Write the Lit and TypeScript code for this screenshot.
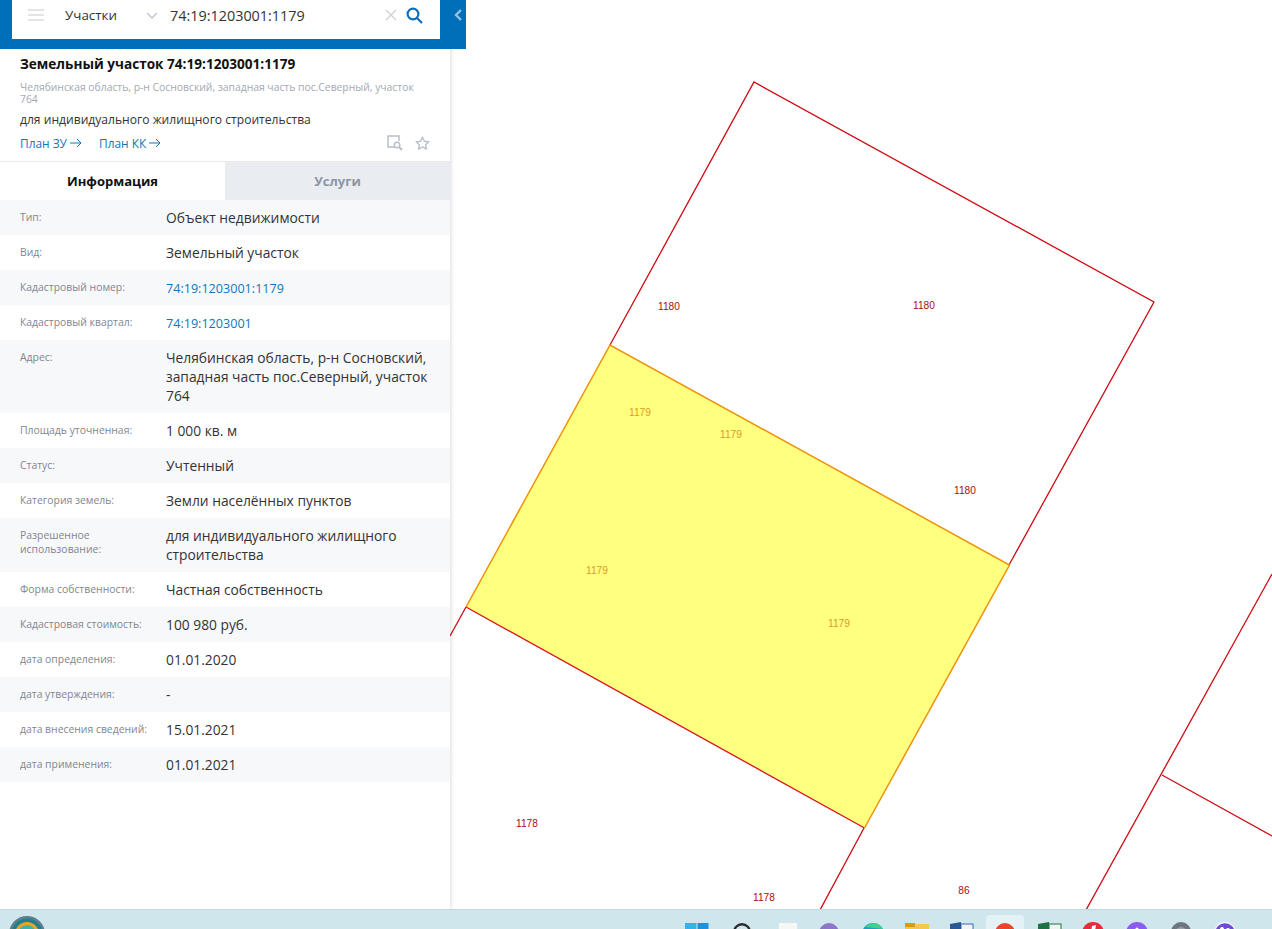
import { LitElement, html, css, svg } from "lit";
import { customElement } from "lit/decorators.js";

type Row = { label: string; value: string; link?: boolean };

const ROWS: Row[] = [
  { label: "Тип:", value: "Объект недвижимости" },
  { label: "Вид:", value: "Земельный участок" },
  { label: "Кадастровый номер:", value: "74:19:1203001:1179", link: true },
  { label: "Кадастровый квартал:", value: "74:19:1203001", link: true },
  { label: "Адрес:", value: "Челябинская область, р-н Сосновский, западная часть пос.Северный, участок 764" },
  { label: "Площадь уточненная:", value: "1 000 кв. м" },
  { label: "Статус:", value: "Учтенный" },
  { label: "Категория земель:", value: "Земли населённых пунктов" },
  { label: "Разрешенное использование:", value: "для индивидуального жилищного строительства" },
  { label: "Форма собственности:", value: "Частная собственность" },
  { label: "Кадастровая стоимость:", value: "100 980 руб." },
  { label: "дата определения:", value: "01.01.2020" },
  { label: "дата утверждения:", value: "-" },
  { label: "дата внесения сведений:", value: "15.01.2021" },
  { label: "дата применения:", value: "01.01.2021" },
];

const LABELS: [string, number, number, string][] = [
  ["1180", 669, 306, "red"],
  ["1180", 924, 305, "red"],
  ["1180", 965, 490, "red"],
  ["1179", 640, 412, "orange"],
  ["1179", 731, 434, "orange"],
  ["1179", 597, 570, "orange"],
  ["1179", 839, 623, "orange"],
  ["1178", 527, 823, "red"],
  ["1178", 764, 897, "red"],
  ["86", 964, 890, "red"],
];

const TASK_ICONS = [
  svg`<rect x="10" y="13" width="11.5" height="11" fill="#2fb4f0"/><rect x="22.5" y="13" width="11" height="11" fill="#1b93e2"/>`,
  svg`<circle cx="23" cy="22" r="7.8" fill="none" stroke="#2b2b2b" stroke-width="2.4"/>`,
  svg`<rect x="16" y="13" width="18" height="20" fill="#f6f6f6"/>`,
  svg`<circle cx="22" cy="23" r="10" fill="#8b78c8"/>`,
  svg`<circle cx="22" cy="24" r="11" fill="#1aa0c8"/><path d="M14 17a11 11 0 0 1 18 2z" fill="#3fd08a"/>`,
  svg`<rect x="10" y="14" width="24" height="12" fill="#f2c94c"/><rect x="10" y="13" width="10" height="4" fill="#dc9a0e"/>`,
  svg`<rect x="22" y="14" width="12" height="12" fill="#f2f4f7" stroke="#3d68ad"/><path d="M11 14l11-2v14H11z" fill="#2b5797"/>`,
  svg`<circle cx="22" cy="23" r="10" fill="#e8452c"/><rect x="24" y="19" width="8" height="3" fill="#f4b400"/>`,
  svg`<rect x="22" y="14" width="12" height="12" fill="#eef5f0" stroke="#217346"/><path d="M11 14l11-2v14H11z" fill="#1e7145"/>`,
  svg`<circle cx="22" cy="23" r="11" fill="#ea2a3a"/><path d="M21 16l4-1-1 6-4 1z" fill="#fff"/>`,
  svg`<circle cx="22" cy="23" r="11" fill="#8a5cf0"/><circle cx="22" cy="19" r="1.6" fill="#fff"/>`,
  svg`<circle cx="22" cy="22" r="10" fill="#6f7680"/><circle cx="22" cy="23" r="6" fill="#9aa1aa"/>`,
  svg`<circle cx="22" cy="23" r="10.5" fill="#6d4bd6" stroke="#f2effc" stroke-width="1.4"/><circle cx="19" cy="19" r="2" fill="#fff"/><circle cx="25" cy="20" r="2" fill="#fff"/>`,
];

@customElement("app-root")
export class AppRoot extends LitElement {
  static styles = css`
    :host {
      display: grid;
      grid-template-rows: 1fr 20px;
      width: 100%;
      height: 929px;
      overflow: hidden;
      background: #fff;
      font-family: "Open Sans", "Noto Sans", sans-serif;
      color: #222;
    }
    .main { display: flex; min-height: 0; }
    .side {
      flex: 0 0 450px;
      width: 450px;
      min-width: 0;
      position: relative;
      z-index: 2;
      background: #fff;
      box-shadow: 1px 0 4px rgba(0, 0, 0, 0.14);
      display: flex;
      flex-direction: column;
      align-items: stretch;
    }
    .bar {
      width: 466px;
      height: 49px;
      box-sizing: border-box;
      background: #006fb9;
      display: flex;
      padding: 0 4px 10px 12px;
      align-items: stretch;
      gap: 14px;
      flex: none;
    }
    .search {
      flex: 1;
      background: #fff;
      display: flex;
      align-items: center;
      padding-bottom: 9px;
    }
    .burger { margin-left: 16px; display: block; }
    .kind { margin-left: 21px; width: 81px; font-size: 13.4px; color: #333; }
    .caret { display: block; }
    .query { margin-left: 12px; flex: 1; font-size: 14.4px; color: #333; }
    .clear { display: block; margin-right: 9px; }
    .glass { display: block; margin-right: 17px; }
    .collapse { display: block; align-self: center; margin-bottom: 9px; }
    .head { padding: 6px 20px 0; height: 113px; box-sizing: border-box; border-bottom: 1px solid #e8eaed; flex: none; }
    .title { font-size: 13.6px; font-weight: 700; line-height: 18px; color: #111; }
    .addr { margin-top: 8px; font-size: 10.35px; line-height: 12px; color: #a2a9b2; }
    .use { margin-top: 7px; font-size: 12.1px; line-height: 16px; color: #333; }
    .links { display: flex; align-items: center; margin-top: 6px; height: 18px; }
    .lnk { font-size: 11.9px; color: #1276bd; display: flex; align-items: center; gap: 3px; margin-right: 17px; }
    .tools { margin-left: auto; display: flex; align-items: center; gap: 12px; }
    .tools svg { display: block; }
    .tabs { display: flex; height: 38px; flex: none; }
    .tab {
      flex: 1;
      display: flex;
      align-items: center;
      justify-content: center;
      font-size: 13px;
      font-weight: 700;
    }
    .on { color: #111; background: #fff; }
    .off { color: #8d96a3; background: #e9ecf1; }
    .row {
      display: grid;
      grid-template-columns: 146px 1fr;
      padding: 8px 20px;
      align-items: start;
    }
    .row:nth-child(odd) { background: #f7f8fa; }
    .k { font-size: 10.4px; line-height: 14px; color: #7f868f; margin-top: 2px; padding-right: 12px; }
    .v { font-size: 13.8px; line-height: 19px; color: #333; }
    .v.a { color: #1276bd; font-size: 12.6px; margin-top: 1px; margin-bottom: -1px; }
    .map { flex: 1; min-width: 0; position: relative; }
    .map svg { display: block; width: 100%; height: 100%; }
    .txt { font-family: "Liberation Sans", Arial, sans-serif; font-size: 10.2px; text-anchor: middle; dominant-baseline: central; }
    .txt.red { fill: #a80c0c; }
    .txt.orange { fill: #dc9a2a; }
    .task {
      background: #cfe6ec;
      border-top: 1px solid #bcd8e0;
      display: flex;
      overflow: hidden;
      position: relative;
      z-index: 3;
      padding-right: 25px;
    }
    .logo { display: block; flex: none; margin-left: 9px; margin-top: 6px; }
    .icons { margin-left: auto; display: flex; }
    .slot { width: 44px; height: 19px; flex: none; }
    .slot svg { display: block; overflow: visible; }
    .slot.active { position: relative; }
    .slot.active::before {
      content: "";
      position: absolute;
      left: 3px;
      right: 3px;
      top: 5px;
      height: 30px;
      border-radius: 4px;
      background: #e4f1f5;
    }
    .slot.active svg { position: relative; }
  `;

  private arrow() {
    return html`<svg width="12" height="10" viewBox="0 0 12 10" fill="none" stroke="#1276bd" stroke-width="1"><path d="M0 5h11M7 1l4 4-4 4"/></svg>`;
  }

  render() {
    return html`
      <div class="main">
        <aside class="side">
          <div class="bar">
            <div class="search">
              <svg class="burger" width="16" height="12" viewBox="0 0 16 12" fill="#e4e4e4"><rect width="16" height="2"/><rect y="5" width="16" height="2"/><rect y="10" width="16" height="2"/></svg>
              <span class="kind">Участки</span>
              <svg class="caret" width="12" height="7" viewBox="0 0 12 7" fill="none" stroke="#c5ccd4" stroke-width="1.6"><path d="M1 1l5 5 5-5"/></svg>
              <span class="query">74:19:1203001:1179</span>
              <svg class="clear" width="12" height="12" viewBox="0 0 12 12" stroke="#cfd2d5" stroke-width="1.4"><path d="M1 1l10 10M11 1L1 11"/></svg>
              <svg class="glass" width="17" height="17" viewBox="0 0 17 17" fill="none" stroke="#0f6fb6" stroke-width="2.2"><circle cx="7" cy="7" r="5.4"/><path d="M11 11l5 5"/></svg>
            </div>
            <svg class="collapse" width="8" height="12" viewBox="0 0 8 12" fill="none" stroke="#93c1e2" stroke-width="2.4"><path d="M7 1L2 6l5 5"/></svg>
          </div>
          <div class="head">
            <div class="title">Земельный участок 74:19:1203001:1179</div>
            <div class="addr">Челябинская область, р-н Сосновский, западная часть пос.Северный, участок 764</div>
            <div class="use">для индивидуального жилищного строительства</div>
            <div class="links">
              <span class="lnk">План ЗУ ${this.arrow()}</span>
              <span class="lnk">План КК ${this.arrow()}</span>
              <span class="tools">
                <svg width="16" height="16" viewBox="0 0 16 16" fill="none" stroke="#b9c0c9" stroke-width="1.5"><path d="M8 12H1V1h11v5"/><circle cx="10" cy="10" r="2.8"/><path d="M12 12l3 3" stroke-width="1.9"/></svg>
                <svg width="15" height="15" viewBox="0 0 15 15" fill="none" stroke="#b9c0c9" stroke-width="1.4" stroke-linejoin="round"><path d="M7.5 1.2l1.9 4 4.4.5-3.2 3 .9 4.4-4-2.2-4 2.2.9-4.4-3.2-3 4.4-.5z"/></svg>
              </span>
            </div>
          </div>
          <div class="tabs">
            <div class="tab on">Информация</div>
            <div class="tab off">Услуги</div>
          </div>
          <div class="rows">
            ${ROWS.map(
              (r) => html`<div class="row">
                <div class="k">${r.label}</div>
                <div class="v ${r.link ? "a" : ""}">${r.value}</div>
              </div>`
            )}
          </div>
        </aside>
        <div class="map">
          <svg viewBox="450 0 822 909" preserveAspectRatio="none">
            <g fill="none" stroke="#cf0a14" stroke-width="1.3">
              <path d="M610 345L754 82L1154 302L1009 565"/>
              <path d="M466 607L450 636"/>
              <path d="M864 828L820 910"/>
              <path d="M1272 574L1086 910"/>
              <path d="M1162 775L1272 836"/>
            </g>
            <path d="M610 345L1009.5 565L864.5 828L466 607Z" fill="#ffff80"/>
            <path d="M466 607L864.5 828" fill="none" stroke="#d8121a" stroke-width="1.3"/>
            <path d="M466 607L610 345L1009.5 565L864.5 828" fill="none" stroke="#ee9208" stroke-width="1.5"/>
            ${LABELS.map(
              ([t, x, y, c]) => svg`<text class="txt ${c}" x=${x} y=${y}>${t}</text>`
            )}
          </svg>
        </div>
      </div>
      <footer class="task">
        <svg class="logo" width="36" height="30" viewBox="0 0 36 30">
          <circle cx="18" cy="18" r="18" fill="#5f7f8c"/>
          <circle cx="18" cy="18" r="15.5" fill="#1f7f8f"/>
          <circle cx="18" cy="18" r="12" fill="#e8a52a"/>
          <circle cx="18" cy="18" r="9" fill="#3bb3a8"/>
        </svg>
        <div class="icons">
          ${TASK_ICONS.map(
            (ic, i) => html`<div class="slot ${i === 7 ? "active" : ""}"><svg width="44" height="44" viewBox="0 0 44 44">${ic}</svg></div>`
          )}
        </div>
      </footer>
    `;
  }
}
